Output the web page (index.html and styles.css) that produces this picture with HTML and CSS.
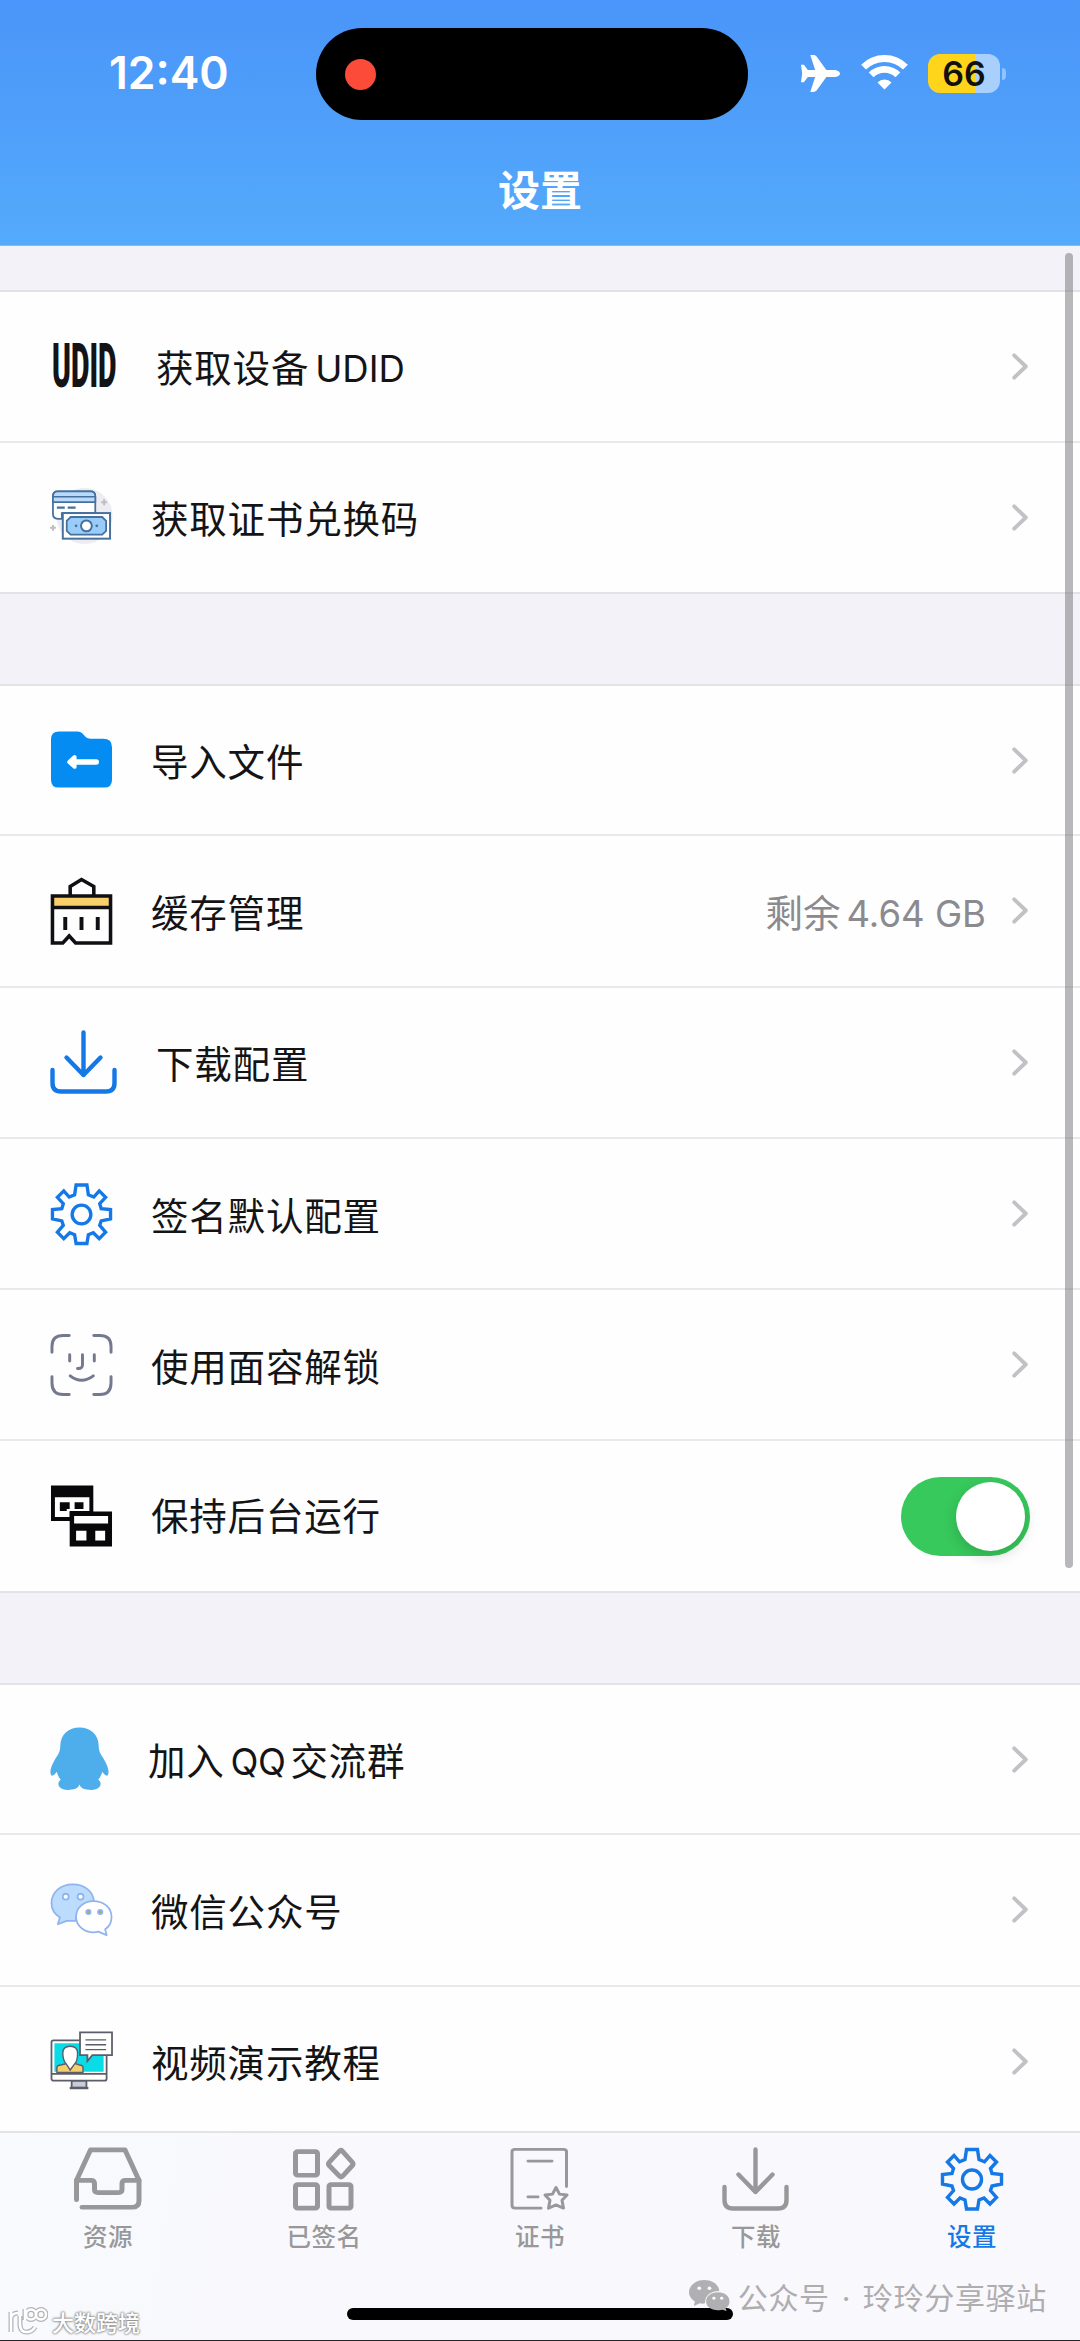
FILE: index.html
```html
<!DOCTYPE html>
<html lang="zh-CN">
<head>
  <meta charset="UTF-8">
  <meta name="viewport" content="width=device-width, initial-scale=1.0">
  <title>设置</title>
  <link rel="stylesheet" href="styles.css">
</head>
<body>
  <svg class="defs" width="0" height="0">
    <symbol id="chevron" viewBox="0 0 18 30">
      <path d="M3 3.500 L15 15 L3 26.500" fill="none" stroke="#c2c1c6" stroke-width="4" stroke-linecap="round" stroke-linejoin="round"/>
    </symbol>
    <symbol id="gear" viewBox="0 0 64 64">
      <path d="M26.500 2.500 H37.500 L39 12.500 L44.500 14.800 L50 8.500 L56.500 15 L50.500 21.500 L52 26.500 L61.500 27.500 V37 L52 39 L50.500 43.500 L56.500 50.500 L50 57 L44 51 L39 53 L37.500 62 H26.500 L25 53 L20 51 L14 57 L7.500 50.500 L13.500 43.500 L12 39 L2.500 37 V27.500 L12 26.500 L13.500 21.500 L7.500 15 L14 8.500 L19.500 14.800 L25 12.500 Z" fill="none" stroke="currentColor" stroke-width="3.400" stroke-linejoin="miter"/>
      <circle cx="32" cy="32.500" r="9.500" fill="none" stroke="currentColor" stroke-width="3.400"/>
    </symbol>
    <symbol id="download" viewBox="0 0 67 64" preserveAspectRatio="none">
      <g fill="none" stroke="currentColor" stroke-width="4.400" stroke-linecap="round" stroke-linejoin="round">
        <path d="M33.500 2.500 V45 M16.500 27.500 L33.500 45 L50.500 27.500"/>
        <path d="M2.500 40 V53 Q2.500 61.500 11 61.500 H56 Q64.500 61.500 64.500 53 V40"/>
      </g>
    </symbol>
  </svg>

  <header class="header">
    <div class="status-bar">
      <div class="time">12:40</div>
      <div class="island"><span class="rec"></span></div>
      <div class="status-icons">
        <svg class="plane" viewBox="0 0 42 40"><path d="M41 20 C41 18 38 16.300 35 16.300 H27 L17 2.500 Q15.500 1 13.800 1 H10.500 L15.500 16.300 H8 L4 11 H1 L2.200 20 L1 29 H4 L8 23.700 H15.500 L10.500 39 H13.800 Q15.500 39 17 37.500 L27 23.700 H35 C38 23.700 41 22 41 20 Z" fill="#fff"/></svg>
        <svg class="wifi" viewBox="0 0 50 38">
          <g fill="none" stroke="#fff" stroke-width="7">
            <path d="M3.500 13.500 A30.500 30.500 0 0 1 46.500 13.500"/>
            <path d="M11.300 21.500 A19.400 19.400 0 0 1 38.700 21.500"/>
          </g>
          <path d="M25 36.500 L17.800 29.200 A10.200 10.200 0 0 1 32.200 29.200 Z" fill="#fff"/>
        </svg>
        <div class="battery"><span>66</span></div>
      </div>
    </div>
    <h1>设置</h1>
  </header>

  <main class="content">
    <div class="group">
      <div class="row wide">
        <div class="icon udid"><span>UDID</span></div>
        <span class="label">获取设备<span class="latin">UDID</span></span>
        <svg class="arrow"><use href="#chevron"/></svg>
      </div>
      <div class="row">
        <svg class="icon" viewBox="0 0 64 64">
          <circle cx="35" cy="31" r="28.500" fill="#ececf1"/>
          <path d="M3 30 V11 Q3 6 8 6 H41 Q46 6 46 11 V28 H12 V34 H9 Q3 34 3 29Z" fill="#fff" stroke="#46719e" stroke-width="1.800"/>
          <path d="M3 11 Q3 6 8 6 H41 Q46 6 46 11 V17 H3Z" fill="#b9dafa" stroke="#46719e" stroke-width="1.800"/>
          <path d="M3 11.500 H46" stroke="#46719e" stroke-width="1.500"/>
          <path d="M7 22.500 H15 M18 22.500 H26" stroke="#46719e" stroke-width="2.200"/>
          <rect x="13" y="28" width="48" height="26" fill="#fff" stroke="#46719e" stroke-width="2"/>
          <path d="M21 32 H53 L57 36 V46 L53 50 H21 L17 46 V36Z" fill="#9accfa" stroke="#46719e" stroke-width="1.800"/>
          <circle cx="37" cy="41" r="5.500" fill="#fff" stroke="#46719e" stroke-width="2"/>
          <circle cx="26.500" cy="41" r="1.400" fill="#46719e"/><circle cx="47.500" cy="41" r="1.400" fill="#46719e"/>
          <path d="M55 14 V20 M52 17 H58 M3 40 V46 M0 43 H6" stroke="#bdbdc5" stroke-width="2"/>
        </svg>
        <span class="label">获取证书兑换码</span>
        <svg class="arrow"><use href="#chevron"/></svg>
      </div>
    </div>

    <div class="group">
      <div class="row">
        <svg class="icon" viewBox="0 0 64 64">
          <path d="M1 11 Q1 3 9 3 H28 Q31 3 33 5 L36.500 9 Q38 10.500 41 10.500 H54 Q63 10.500 63 19 V52 Q63 60 55 60 H9 Q1 60 1 52Z" fill="#048cf3"/>
          <path d="M22 34 H47" stroke="#fff" stroke-width="5.500" stroke-linecap="round"/>
          <path d="M19.500 34 L25 29 V39Z" fill="#fff" stroke="#fff" stroke-width="4" stroke-linejoin="round"/>
        </svg>
        <span class="label">导入文件</span>
        <svg class="arrow"><use href="#chevron"/></svg>
      </div>
      <div class="row">
        <svg class="icon tall" viewBox="0 0 64 68" preserveAspectRatio="none">
          <path d="M2.500 19 H61.500 V31 H2.500Z" fill="#f9cf69"/>
          <g fill="none" stroke="#101014" stroke-width="3.600">
            <path d="M20.500 19 V9.500 L32 2.500 L44.500 9.500 V19"/>
            <path d="M2.500 19 H61.500 V66 H26 L19.500 59 L13 66 H2.500Z"/>
            <path d="M2.500 30.500 H61.500"/>
            <path d="M15.500 40 V53 M32 40 V53 M48.500 40 V53" stroke-width="4"/>
          </g>
        </svg>
        <span class="label">缓存管理</span>
        <span class="detail">剩余<span class="latin">4.64 GB</span></span>
        <svg class="arrow"><use href="#chevron"/></svg>
      </div>
      <div class="row wide">
        <svg class="icon blue"><use href="#download"/></svg>
        <span class="label">下载配置</span>
        <svg class="arrow"><use href="#chevron"/></svg>
      </div>
      <div class="row">
        <svg class="icon blue"><use href="#gear"/></svg>
        <span class="label">签名默认配置</span>
        <svg class="arrow"><use href="#chevron"/></svg>
      </div>
      <div class="row">
        <svg class="icon" viewBox="0 0 64 64">
          <g fill="none" stroke="#75798f" stroke-width="3" stroke-linecap="round">
            <path d="M2 19 V13 Q2 2 13.500 2 H19.500 M44.500 2 H50.500 Q62 2 62 13 V19 M62 44 V50 Q62 62 50.500 62 H44.500 M19.500 62 H13.500 Q2 62 2 50 V44"/>
            <path d="M20 21.500 V28 M45 21.500 V28 M33 21.500 V32 Q33 36 28 35.500 M20.500 43 Q32 52 44 43"/>
          </g>
        </svg>
        <span class="label">使用面容解锁</span>
        <svg class="arrow"><use href="#chevron"/></svg>
      </div>
      <div class="row switch-row">
        <svg class="icon" viewBox="0 0 64 64">
          <path d="M1 1 H44 V37 H1Z" fill="#08080a"/>
          <path d="M5 13 H40 V27 H20 V33 H5Z" fill="#fff"/>
          <path d="M10 18 H20 V25 H17 V27 H10Z M25 18 H34 V25 H25Z" fill="#08080a"/>
          <path d="M20 27.500 H63 V63 H20Z" fill="#08080a"/>
          <path d="M24.500 32 H59 V39.500 H24.500Z M26.500 47 H37 V57 H26.500Z M46 47 H56 V57 H46Z" fill="#fff"/>
        </svg>
        <span class="label">保持后台运行</span>
        <span class="toggle"></span>
      </div>
    </div>

    <div class="group">
      <div class="row narrow">
        <svg class="icon" viewBox="0 0 60 64">
          <path d="M30 0 C41 0 49 7 49.500 18 C49.500 21 50 24 51.500 27 C56 34 60 41 59.500 46 C59 51 56 49 53 45 C52.500 48 51 51 49 53 C53 55 53 63 42 63.500 C36 63.500 31 62 30 58 C29 62 24 63.500 18 63.500 C7 63 7 55 11 53 C9 51 7.500 48 7 45 C4 49 1 51 .5 46 C0 41 4 34 8.500 27 C10 24 10.500 21 10.500 18 C11 7 19 0 30 0Z" fill="#4daeeb"/>
        </svg>
        <span class="label">加入<span class="latin qq">QQ</span>交流群</span>
        <svg class="arrow"><use href="#chevron"/></svg>
      </div>
      <div class="row">
        <svg class="icon" viewBox="0 0 64 64">
          <g stroke="#8fb4f0" stroke-width="1.800" stroke-linejoin="round">
            <path d="M23 6 C35 6 44 13 44.500 23 C32 25 26 34 26.500 43 H17 L8 46.500 L10 39.500 C4 36 1.500 31 1.500 25 C1.500 14 11 6 23 6Z" fill="#bcdcfd"/>
            <path d="M44 23 C55 23 62.500 30 62.500 39 C62.500 45 60 49 56 51.500 L57.500 57.500 L49 54 C36 57 26.500 48 26.500 39 C26.500 30 34 23 44 23Z" fill="#fff"/>
            <circle cx="16" cy="18.500" r="3" fill="#fff"/><circle cx="31" cy="18.500" r="3" fill="#fff"/>
            <circle cx="39" cy="34" r="2.200" fill="#b0a75c"/><circle cx="51" cy="34" r="2.200" fill="#b0a75c"/>
          </g>
        </svg>
        <span class="label">微信公众号</span>
        <svg class="arrow"><use href="#chevron"/></svg>
      </div>
      <div class="row">
        <svg class="icon" viewBox="0 0 64 64">
          <g stroke="#5b5d68" stroke-width="1.800">
            <path d="M22 52 H37 V59 H22Z" fill="#c9cbd8"/>
            <path d="M20 59.500 H39" stroke-width="2.400"/>
            <rect x="1.500" y="11" width="56" height="41" rx="2" fill="#fff"/>
            <path d="M1.500 45 H57.500"/>
          </g>
          <path d="M4.500 14 H54.500 V43 H4.500Z" fill="#09dbe7"/>
          <g stroke="#5b5d68" stroke-width="1.400">
            <path d="M7 43.500 V39 Q7 36 11 36 L17 34.500 L20.500 41 L25 34.500 L30 36 Q33.500 36 33.500 39 V43.500Z" fill="#f6ce6b"/>
            <path d="M20.500 17 Q28 17 28 24 Q28 32 25 35 L20.500 41 L16.500 35 Q13 31 13 24 Q13 17 20.500 17Z" fill="#fff"/>
            <path d="M30.500 3 H63 V26 H43 L38 32 V26 H30.500Z" fill="#fff" stroke-width="1.800"/>
            <path d="M36 10.500 H57 M36 15.500 H57 M36 20.500 H57"/>
          </g>
        </svg>
        <span class="label">视频演示教程</span>
        <svg class="arrow"><use href="#chevron"/></svg>
      </div>
    </div>
    <div class="scrollbar"></div>
  </main>

  <nav class="tab-bar">
    <div class="tab">
      <svg viewBox="0 0 68 68" preserveAspectRatio="none">
        <g fill="none" stroke="currentColor" stroke-width="5" stroke-linecap="round" stroke-linejoin="round">
          <path d="M2.500 56 V35.500 L16.500 3 H51 L65 35.500 V57 Q65 64 58 64 H8"/>
          <path d="M2.500 35.500 H17 Q20.500 35.500 20.500 39 V45 Q20.500 48.500 24 48.500 H44.500 Q48 48.500 48 45 V39 Q48 35.500 51.500 35.500 H65"/>
        </g>
      </svg>
      <span>资源</span>
    </div>
    <div class="tab">
      <svg viewBox="0 0 68 68" preserveAspectRatio="none">
        <g fill="none" stroke="currentColor" stroke-width="5" stroke-linejoin="round">
          <rect x="5.500" y="5" width="22" height="25" rx="2"/>
          <rect x="5.500" y="40" width="22" height="25" rx="2"/>
          <rect x="39" y="40" width="22" height="25" rx="2"/>
          <path d="M50 3.800 Q51 3 52 4 L62.500 16.500 Q63.500 18 62.500 19.500 L52.500 31 Q51 32.500 49.500 31 L39 19.500 Q38 18 39 16.500Z"/>
        </g>
      </svg>
      <span>已签名</span>
    </div>
    <div class="tab">
      <svg viewBox="0 0 68 68" preserveAspectRatio="none">
        <g fill="none" stroke="currentColor" stroke-width="3" stroke-linecap="round" stroke-linejoin="round">
          <path d="M60.500 42 V5 Q60.500 2.500 57.500 2.500 H9 Q6 2.500 6 5 V62 Q6 65 9 65 H35"/>
          <path d="M22 15 H46 M22 53 H32"/>
          <path d="M50 43 L53.500 50 L61 51 L56 56.500 L57.500 65 L50 61.500 L42.500 65 L44 56.500 L39 51 L46.500 50Z"/>
        </g>
      </svg>
      <span>证书</span>
    </div>
    <div class="tab">
      <svg><use href="#download" width="67" height="64"/></svg>
      <span>下载</span>
    </div>
    <div class="tab active">
      <svg><use href="#gear" x="2" width="64" height="64"/></svg>
      <span>设置</span>
    </div>
  </nav>

  <div class="home-indicator"></div>

  <div class="account">
    <svg viewBox="0 0 42 34" preserveAspectRatio="none">
      <path d="M15.500 0 C24 0 30.500 5 31 12 C22 12 16 17 16.500 25.500 Q14 26.500 11 25.500 L5 28.500 L6 23.500 C2 21 0 17.500 0 13.500 C0 6 7 0 15.500 0Z M29.500 13.500 C37 13.500 41.500 18 41.500 23.500 C41.500 27 40 29 37.500 31 L38.500 34 L34 32.500 C25 35 17.500 30 17.500 23.500 C17.500 18 22.500 13.500 29.500 13.500Z" fill="#b0afb2"/>
      <g fill="#fff"><circle cx="10.500" cy="9" r="1.900"/><circle cx="21" cy="9" r="1.900"/><circle cx="25.500" cy="20" r="1.600"/><circle cx="33.500" cy="20" r="1.600"/></g>
    </svg>
    <span>公众号<span class="dot">·</span>玲玲分享驿站</span>
  </div>

  <div class="watermark">
    <svg viewBox="0 0 40 30">
      <g class="mark-edge"><path d="M3 6 V26 M3 12 Q4 7 10 7 M12 10 V18 Q12 27 20 26 Q25 25 27 21 M17 3 V14"/><circle cx="23" cy="8.500" r="5"/><circle cx="33" cy="8.500" r="5"/></g>
      <g class="mark-fill"><path d="M3 6 V26 M3 12 Q4 7 10 7 M12 10 V18 Q12 27 20 26 Q25 25 27 21 M17 3 V14"/><circle cx="23" cy="8.500" r="5"/><circle cx="33" cy="8.500" r="5"/></g>
    </svg>
    <span>大数跨境</span>
  </div>
</body>
</html>
```
FILE: styles.css
```css
* {
  box-sizing: border-box;
}
body {
  margin: 0;
  width: 1080px;
  height: 2341px;
  position: relative;
  overflow: hidden;
  display: flex;
  flex-direction: column;
  background: #f2f2f8;
  color: #141416;
  font-family: Inter, 'Noto Sans CJK SC', sans-serif;
}
svg {
  display: block;
  flex-shrink: 0;
}
.defs {
  position: absolute;
}

/* header */
.header {
  height: 246px;
  flex-shrink: 0;
  background: linear-gradient(#4a95f9, #54aafb);
  border-bottom: 1px solid #8fb9e2;
  color: #fff;
}
.status-bar {
  display: grid;
  grid-template-columns: 316px 432px 332px;
  height: 120px;
  padding-top: 28px;
}
.time {
  padding: 23px 0 0 109px;
  font-size: 44.5px;
  line-height: 44px;
  font-weight: 600;
}
.island {
  height: 92px;
  border-radius: 46px;
  background: #000;
  display: flex;
  align-items: center;
  padding-left: 29px;
}
.rec {
  width: 31px;
  height: 31px;
  border-radius: 50%;
  background: #fc4b38;
}
.status-icons {
  display: flex;
  align-items: center;
  height: 90px;
  padding-left: 51px;
}
.plane {
  width: 43px;
  height: 39px;
}
.wifi {
  width: 49px;
  height: 37px;
  margin: 0 0 2px 18px;
}
.battery {
  position: relative;
  width: 72px;
  height: 39px;
  margin-left: 19px;
  border-radius: 12px;
  background: linear-gradient(90deg, #ffd51c 66%, #a9d0fc 66%);
  color: #101010;
  font-size: 34px;
  font-weight: 600;
  line-height: 39px;
  text-align: center;
}
.battery::after {
  content: '';
  position: absolute;
  right: -6px;
  top: 14px;
  width: 4px;
  height: 12px;
  border-radius: 0 4px 4px 0;
  background: #91c3fc;
}
h1 {
  margin: 0;
  padding-top: 41px;
  font-size: 42px;
  line-height: 60px;
  font-weight: 600;
  text-align: center;
}

/* settings list */
.content {
  position: relative;
  flex: 1;
  min-height: 0;
  overflow: hidden;
  padding-top: 44px;
}
.group {
  background: #fefefe;
  border-top: 2px solid #e3e3e7;
  margin-bottom: 90px;
}
.row {
  display: flex;
  align-items: center;
  height: 151.3px;
  padding: 0 50px;
  border-bottom: 2px solid #e9e9ed;
}
.row:first-child {
  height: 150.5px;
}
.row:last-child {
  border-color: #e3e3e7;
}
.icon {
  width: 63px;
  height: 64px;
}
.wide .icon {
  width: 67px;
}
.narrow .icon {
  width: 59px;
}
.icon.tall {
  height: 68px;
}
.blue {
  color: #1478e6;
}
.udid {
  flex-shrink: 0;
  padding-left: 2px;
  font-family: Roboto, sans-serif;
  font-size: 62px;
  line-height: 64px;
  font-weight: 900;
}
.udid span {
  display: inline-block;
  transform: scaleX(.46);
  transform-origin: 0 50%;
}
.label {
  flex: 1;
  margin-left: 38px;
  padding-top: 6px;
  font-size: 37.5px;
  letter-spacing: .8px;
  line-height: 54px;
  white-space: nowrap;
}
.wide .label,
.narrow .label {
  margin-left: 39px;
}
.switch-row .label {
  padding-top: 2px;
}
.latin {
  margin-left: 6px;
  font-size: 36.5px;
  letter-spacing: 0;
}
.qq {
  margin-right: 5px;
  letter-spacing: -.5px;
}
.detail {
  padding-top: 6px;
  margin-right: 25px;
  font-size: 37.5px;
  line-height: 54px;
  color: #8b8a8f;
}
.arrow {
  width: 18px;
  height: 29px;
  margin-right: 1px;
}
.toggle {
  width: 129px;
  height: 79px;
  border-radius: 40px;
  background: #37c95c;
  display: flex;
  align-items: center;
  justify-content: flex-end;
  padding-right: 5px;
}
.toggle::after {
  content: '';
  width: 69px;
  height: 69px;
  border-radius: 50%;
  background: #fff;
  box-shadow: 0 5px 14px rgba(0,0,0,0.16);
}
.scrollbar {
  position: absolute;
  top: 7px;
  right: 7px;
  width: 8px;
  height: 1315px;
  border-radius: 4px;
  background: rgba(100,97,102,0.45);
}

/* bottom tabs */
.tab-bar {
  display: grid;
  grid-template-columns: repeat(5, 1fr);
  height: 210px;
  flex-shrink: 0;
  padding-top: 14px;
  border-top: 2px solid #e3e3e6;
  border-bottom: 1px solid #242428;
  background: linear-gradient(100deg, #f8fafd, #f9f8fc 35%);
}
.tab {
  display: flex;
  flex-direction: column;
  align-items: center;
  color: #98989a;
  font-size: 24.5px;
  line-height: 34px;
  letter-spacing: .5px;
  font-weight: 500;
}
.tab svg {
  width: 68px;
  height: 64px;
  margin-bottom: 9px;
}
.tab.active {
  color: #1478e6;
}
.home-indicator {
  position: absolute;
  left: 347px;
  bottom: 21px;
  width: 386px;
  height: 12px;
  border-radius: 6px;
  background: #000;
}
.account {
  position: absolute;
  right: 33px;
  bottom: 22px;
  display: flex;
  align-items: center;
  gap: 8px;
  color: #aeadb0;
  font-family: 'Noto Sans CJK SC', sans-serif;
  font-size: 30px;
  line-height: 42px;
  letter-spacing: .7px;
}
.account svg {
  width: 41px;
  height: 31px;
  margin-bottom: 3px;
}
.dot {
  display: inline-block;
  width: 33px;
  text-align: center;
  font-family: Inter, sans-serif;
}
.watermark {
  position: absolute;
  left: 8px;
  bottom: 5px;
  display: flex;
  align-items: center;
  gap: 4px;
  color: #fff;
  font-family: 'Noto Sans CJK SC', sans-serif;
  font-size: 22px;
  line-height: 30px;
  font-weight: 500;
  text-shadow: 0 0 2px #888, 0 0 2px #888, 0 0 3px #999;
}
.watermark svg {
  width: 40px;
  height: 30px;
}
.mark-edge, .mark-fill {
  fill: none;
  stroke: #b5b5b8;
  stroke-width: 5;
}
.mark-fill {
  stroke: #fff;
  stroke-width: 2.5;
}
```
